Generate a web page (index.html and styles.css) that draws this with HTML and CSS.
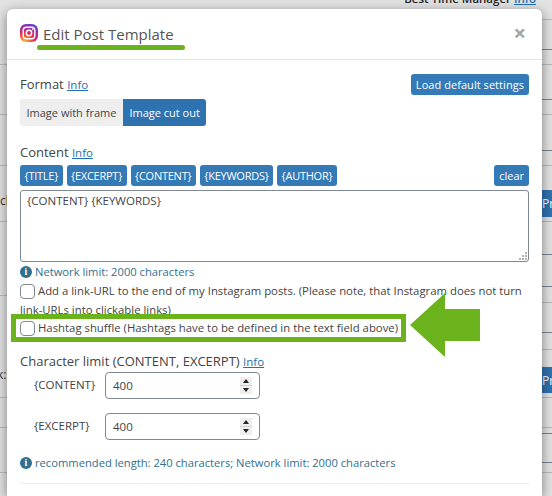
FILE: index.html
```html
<!DOCTYPE html>
<html lang="en">
<head>
  <meta charset="UTF-8" />
  <title>Edit Post Template</title>
  <link rel="stylesheet" href="styles.css">
</head>
<body>

  <!-- Page behind the dialog -->
  <div class="page">
    <div class="page-main">
      <div class="page-title">Best Time Manager <a href="#">Info</a></div>
      <div class="main-rows">
        <div></div>
        <div></div>
        <div></div>
        <div class="row-cl">cl</div>
        <div></div>
        <div class="row-ks">k:)</div>
        <div></div>
        <div></div>
      </div>
    </div>
    <div class="page-side">
      <div></div><div class="dark"></div><div></div><div class="dark"></div><div></div><div class="dark"></div><div></div>
      <div class="gap"></div>
      <div class="side-btn">Pro</div>
      <div></div><div class="dark"></div><div class="dark"></div><div></div><div class="dark"></div><div></div>
      <div class="gap"></div>
      <div class="side-btn">Pro</div>
      <div></div><div></div><div class="dark"></div><div class="dark"></div><div></div>
    </div>
  </div>

  <!-- Dialog -->
  <div class="modal">
    <div class="modal-header">
      <svg class="insta" viewBox="0 0 18 18" width="18" height="18">
        <defs>
          <radialGradient id="ig" cx="25%" cy="105%" r="115%">
            <stop offset="0" stop-color="#fdc14b"/>
            <stop offset="0.3" stop-color="#f56a2c"/>
            <stop offset="0.55" stop-color="#d6246e"/>
            <stop offset="0.85" stop-color="#8a32b8"/>
            <stop offset="1" stop-color="#5b4fcf"/>
          </radialGradient>
        </defs>
        <rect width="18" height="18" rx="6" fill="url(#ig)"/>
        <rect x="3.2" y="3.2" width="11.6" height="11.6" rx="3.2" fill="none" stroke="#fff" stroke-width="1.4"/>
        <circle cx="9" cy="9" r="2.7" fill="none" stroke="#fff" stroke-width="1.4"/>
        <circle cx="12.6" cy="5.4" r="0.8" fill="#fff"/>
      </svg>
      <h4>Edit Post Template</h4>
      <span class="close">×</span>
    </div>

    <div class="modal-body">
      <div class="format-row">
        <div>
          <div class="label">Format <a href="#">Info</a></div>
          <div class="btn-group">
            <button class="seg">Image with frame</button>
            <button class="seg seg-active">Image cut out</button>
          </div>
        </div>
        <button class="btn btn-load">Load default settings</button>
      </div>

      <div class="label content-label">Content <a href="#">Info</a></div>
      <div class="tag-row">
        <button class="btn">{TITLE}</button>
        <button class="btn">{EXCERPT}</button>
        <button class="btn">{CONTENT}</button>
        <button class="btn">{KEYWORDS}</button>
        <button class="btn">{AUTHOR}</button>
        <button class="btn btn-clear">clear</button>
      </div>
      <div class="field-wrap">
        <textarea class="text-field">{CONTENT} {KEYWORDS}</textarea>
        <svg class="grip" viewBox="0 0 8 8" width="8" height="8">
          <path d="M6 0h2v2H6zM3 3h2v2H3zM6 3h2v2H6zM0 6h2v2H0zM3 6h2v2H3zM6 6h2v2H6z" fill="#b5b5b5"/>
        </svg>
      </div>
      <div class="note"><span class="info-dot">i</span>Network limit: 2000 characters</div>

      <div class="check-row"><span class="checkbox"></span>Add a link-URL to the end of my Instagram posts. (Please note, that Instagram does not turn link-URLs into clickable links)</div>
      <div class="check-row shuffle"><span class="checkbox"></span>Hashtag shuffle (Hashtags have to be defined in the text field above)</div>

      <div class="label limit-label">Character limit (CONTENT, EXCERPT) <a href="#">Info</a></div>
      <div class="limit-row">
        <span class="limit-name">{CONTENT}</span>
        <div class="number">
          <input type="number" value="400">
          <div class="spin"><i class="up"></i><i class="down"></i></div>
        </div>
      </div>
      <div class="limit-row">
        <span class="limit-name">{EXCERPT}</span>
        <div class="number">
          <input type="number" value="400">
          <div class="spin"><i class="up"></i><i class="down"></i></div>
        </div>
      </div>
      <div class="note note-limit"><span class="info-dot">i</span>recommended length: 240 characters; Network limit: 2000 characters</div>
      <hr>
    </div>

    <!-- Green annotations on top of the screenshot -->
    <div class="mark-line"></div>
    <div class="mark-box"></div>
    <svg class="mark-arrow" viewBox="0 0 70 64" width="70" height="64">
      <polygon points="0,32 35,0 35,16 70,16 70,48 35,48 35,64" fill="#6ab31d"/>
    </svg>
  </div>

</body>
</html>
```

FILE: styles.css
```css
/* Reset & Base */
* { margin: 0; padding: 0; box-sizing: border-box; }
html, body { width: 552px; height: 496px; overflow: hidden; }
body {
  font-family: 'Open Sans', sans-serif;
  font-size: 11.5px;
  color: #444;
  background: #e2e2e2;
  position: relative;
}
a { color: #2271b1; text-decoration: underline; }
button { font-family: inherit; border: none; cursor: pointer; }

/* Page behind the dialog */
.page { display: flex; height: 496px; overflow: hidden; }
.page-main { width: 542px; flex: none; }
.page-title { height: 0; margin-top: -9px; margin-right: 6px; text-align: right; font-weight: 600; font-size: 11.5px; color: #222; }
.main-rows { display: grid; grid-template-rows: 65px 50px 51px 56px 74px 102px 30px 45px; margin-top: 9px; }
.main-rows > div { border-bottom: 1px solid #b9b9b9; color: #333; font-size: 12px; }
.row-cl { padding-top: 26px; }
.row-ks { padding-top: 70px; margin-left: -3px; }
.page-side {
  flex: 1; display: grid;
  grid-template-rows: 20px 30px 15px 35px 15px 36px 15px 24px 27px 5px 33px 32px 16px 30px 17px 17px 26px 5px 30px 6px 29px 10px 23px;
}
.page-side > div { border-bottom: 1px solid #b9b9b9; }
.page-side > .dark { border-bottom-color: #76828f; }
.page-side > .gap { border-bottom: none; }
.page-side > .side-btn { border-bottom: none; background: #2f72b0; color: #fff; font-size: 12px; line-height: 27px; white-space: nowrap; }

/* Dialog */
.modal {
  position: absolute; top: 9px; left: 7px;
  width: 535px; height: 487px;
  background: #fff;
  border-radius: 6px 6px 0 0;
  box-shadow: 0 3px 12px rgba(0,0,0,0.45);
}
.modal-header {
  display: flex; align-items: center; gap: 5px;
  height: 51px;
  padding: 0 13px;
  border-bottom: 1px solid #e5e5e5;
}
.insta { flex: none; margin-top: -3px; }
.modal-header h4 { font-size: 15px; font-weight: 400; color: #555; flex: 1; margin-top: -1px; }
.close { font-size: 22px; font-weight: 700; color: #a5a5a5; line-height: 1; margin-right: 3px; margin-top: -5px; }
.modal-body { padding: 14px 13px 0; }

.label { font-size: 13px; color: #444; line-height: 20px; }
.label a { font-size: 11.5px; }

.format-row { display: flex; justify-content: space-between; align-items: flex-start; }
.btn-group { display: flex; margin-top: 4px; }
.seg { height: 27px; padding: 0 6.5px; font-size: 11px; background: #eee; color: #444; }
.seg:first-child { border-radius: 3px 0 0 3px; }
.seg:last-child { border-radius: 0 3px 3px 0; }
.seg-active { background: #2f72b0; color: #fff; }

.btn {
  height: 21px; padding: 0 4.5px;
  font-size: 11px; color: #fff; letter-spacing: -0.25px;
  background: #337ab7; border-radius: 3px;
}
.btn-load { padding: 0 5px; letter-spacing: 0.05px; }
.btn-clear { margin-left: auto; padding: 0 5px; letter-spacing: 0; }

.content-label { margin-top: 16px; }
.tag-row { display: flex; gap: 4px; margin-top: 2px; }

.field-wrap { position: relative; margin-top: 4px; }
.text-field {
  display: block; width: 100%; height: 72px;
  padding: 2px 6px;
  font-family: inherit; font-size: 11.5px; color: #444;
  border: 1px solid #7e8993; border-radius: 3px;
  resize: none;
}
.grip { position: absolute; right: 2px; bottom: 2px; }

.note { display: flex; align-items: center; gap: 3px; margin-top: 1px; font-size: 11.2px; line-height: 18px; color: #31708f; }
.info-dot {
  width: 12px; height: 12px; flex: none;
  border-radius: 50%; background: #31708f; color: #fff;
  font: 700 10px/12px 'Liberation Serif', serif; text-align: center;
}

.check-row { font-size: 11.35px; line-height: 18.5px; margin-top: 1px; }
.checkbox {
  display: inline-block; width: 15px; height: 15px;
  margin-right: 3px; vertical-align: -4px;
  border: 1px solid #7e8993; border-radius: 4px; background: #fff;
}
.shuffle { margin-top: 0; }

.limit-label { margin-top: 13px; }
.limit-row { display: flex; align-items: center; margin-top: 0; padding-left: 14px; font-size: 11.5px; }
.limit-row + .limit-row { margin-top: 14px; }
.limit-name { width: 71px; margin-top: -2px; }
.number { position: relative; width: 155px; height: 27px; }
.number input {
  display: block; width: 100%; height: 100%; padding: 0 7px;
  font-family: inherit; font-size: 11.5px; color: #444;
  border: 1px solid #7e8993; border-radius: 4px;
  appearance: textfield;
}
.number input::-webkit-inner-spin-button { display: none; }
.spin { position: absolute; right: 8px; top: 5px; width: 12px; height: 17px; display: flex; flex-direction: column; gap: 1px; background: #cfcfcf; }
.spin i { flex: 1; position: relative; background: #efefef; }
.spin i::after {
  content: ""; position: absolute; left: 3px;
  border-left: 3px solid transparent; border-right: 3px solid transparent;
}
.spin .up::after { top: 2px; border-bottom: 4px solid #222; }
.spin .down::after { top: 2px; border-top: 4px solid #222; }

.note-limit { margin-top: 14px; }
hr { border: none; border-top: 1px solid #eee; margin-top: 11px; }

/* Annotations */
.mark-line { position: absolute; left: 30px; top: 36px; width: 148px; height: 5px; border-radius: 3px; background: #6ab31d; }
.mark-box { position: absolute; left: 4px; top: 305px; width: 395px; height: 28px; border: 5px solid #6ab31d; }
.mark-arrow { position: absolute; left: 403px; top: 284px; }
```
